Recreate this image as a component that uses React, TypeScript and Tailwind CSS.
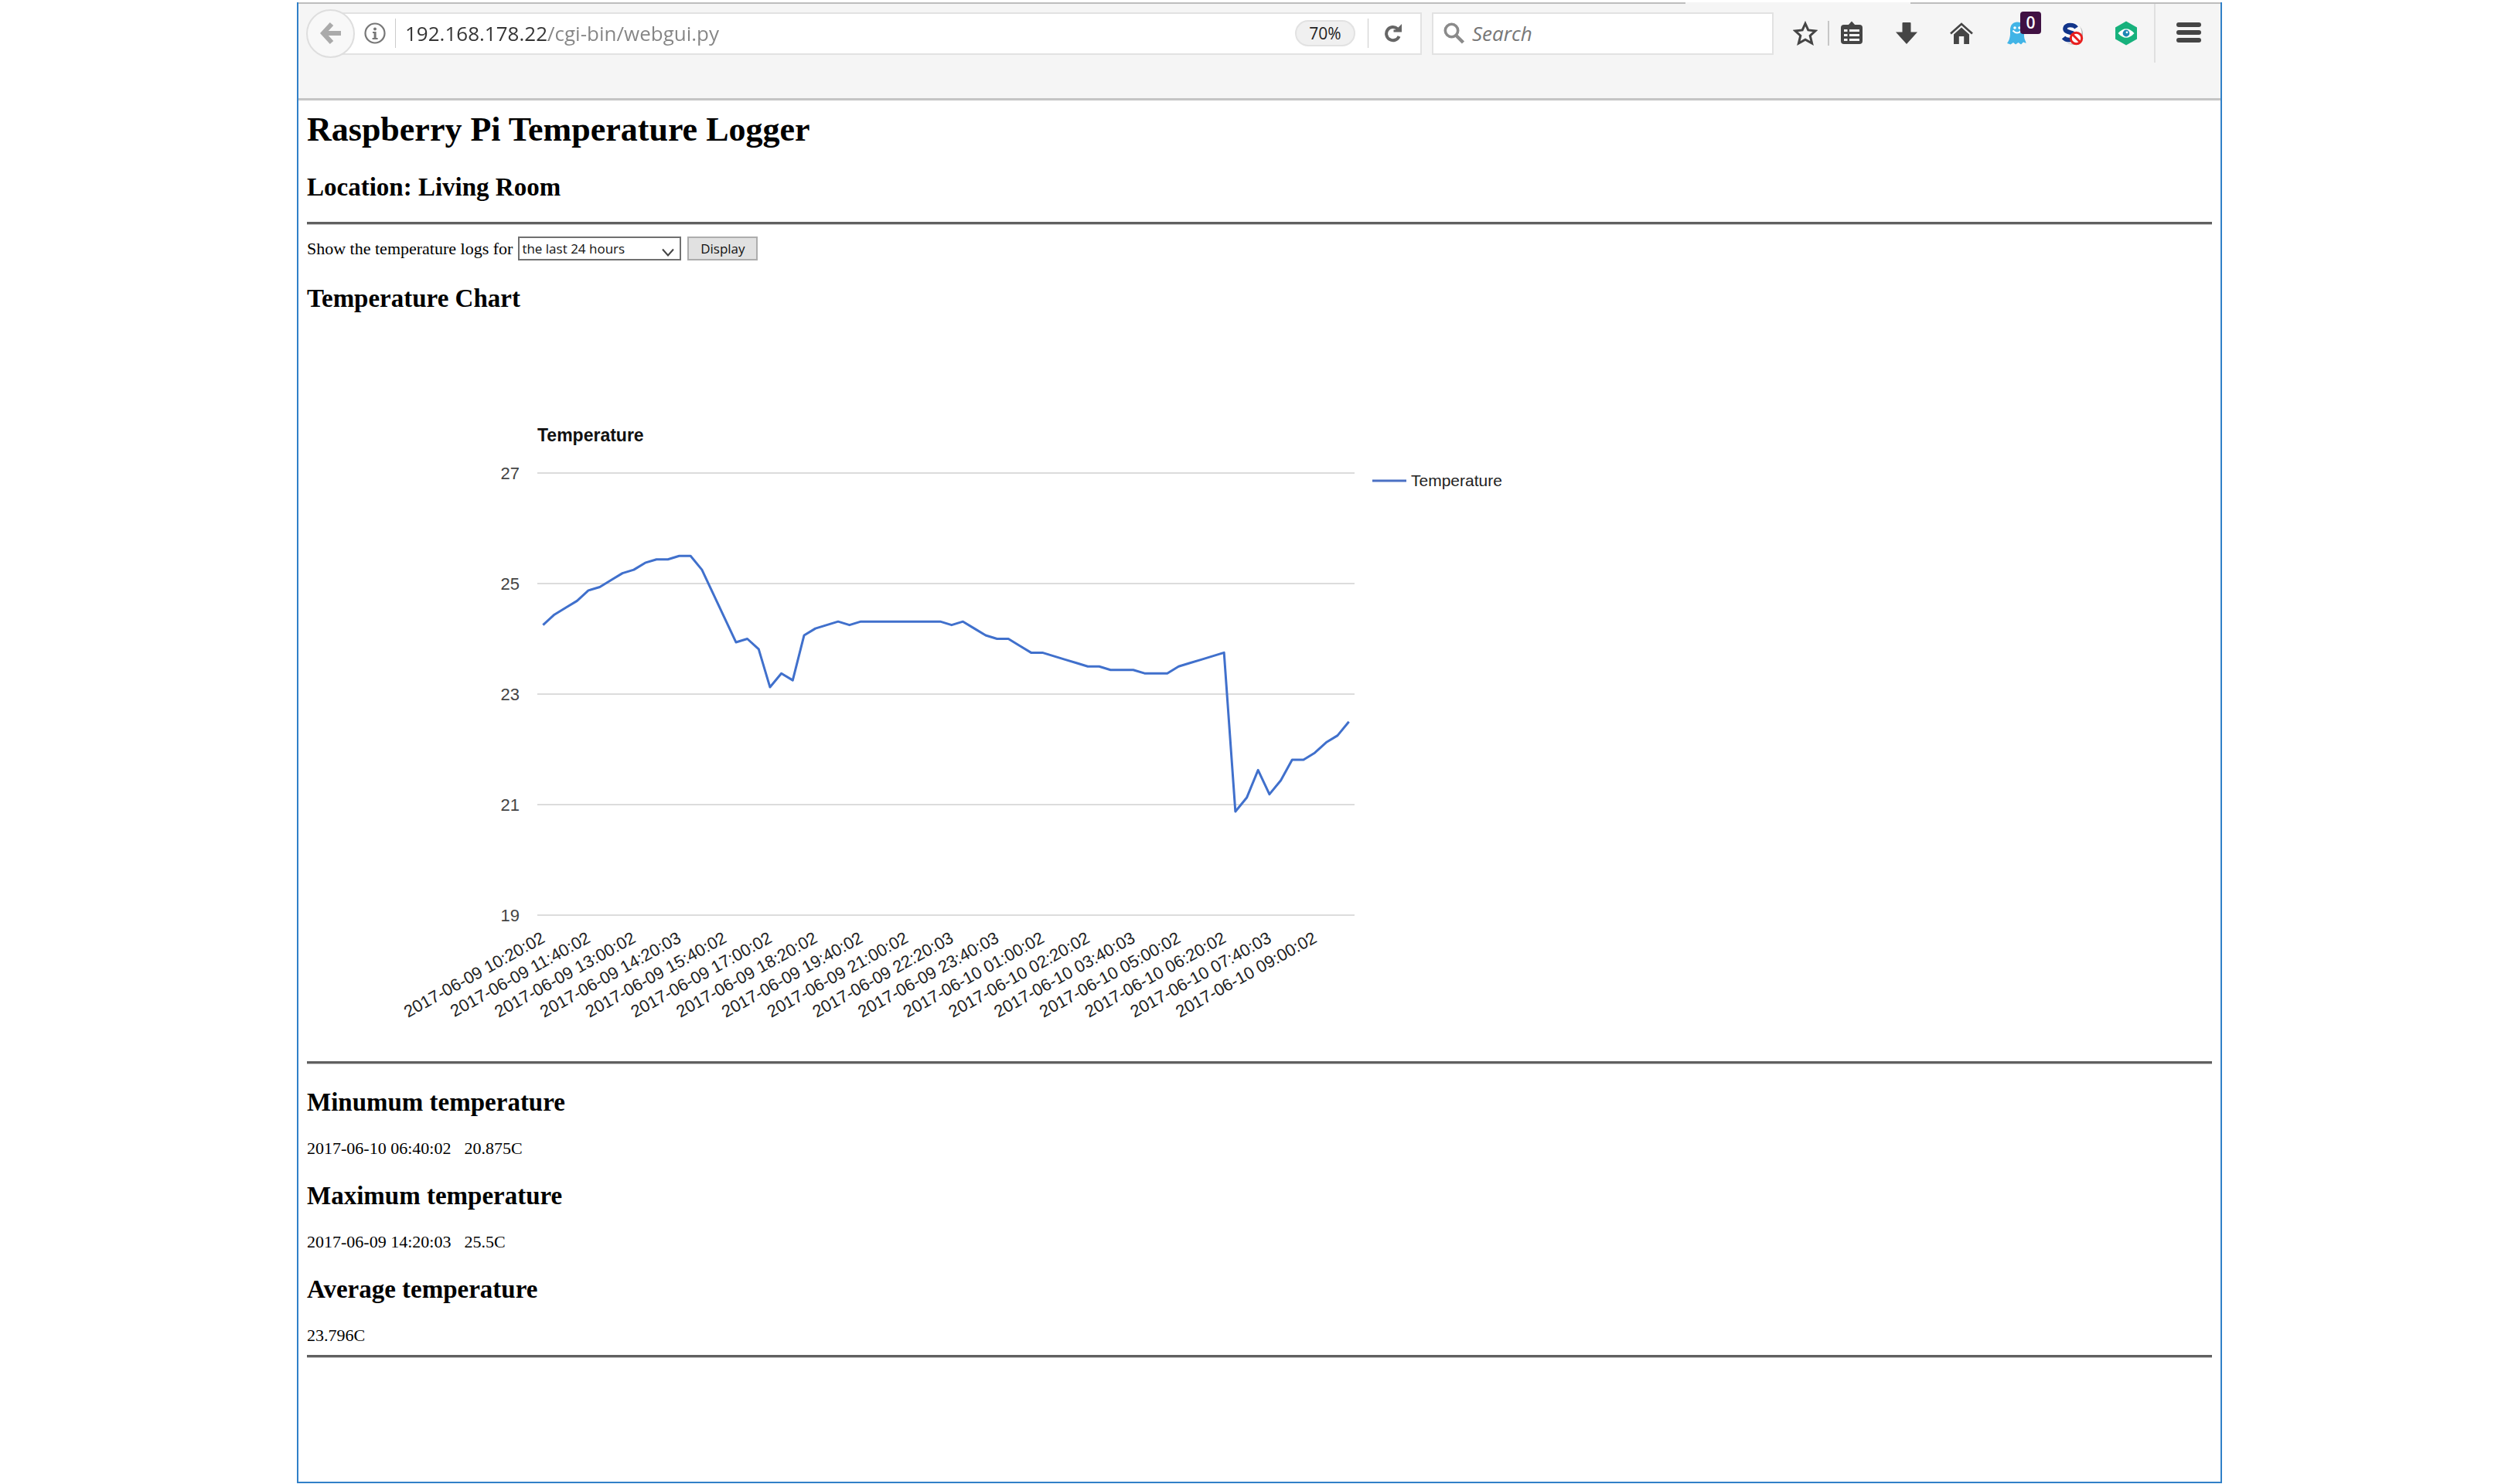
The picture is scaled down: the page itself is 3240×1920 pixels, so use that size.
import React from "react";

const READINGS = [
  24.25, 24.4375, 24.5625, 24.6875, 24.875, 24.9375, 25.0625, 25.1875, 25.25, 25.375, 25.4375, 25.4375,
  25.5, 25.5, 25.25, 24.8125, 24.375, 23.9375, 24, 23.8125, 23.125, 23.375, 23.25, 24.0625,
  24.1875, 24.25, 24.3125, 24.25, 24.3125, 24.3125, 24.3125, 24.3125, 24.3125, 24.3125, 24.3125, 24.3125,
  24.25, 24.3125, 24.1875, 24.0625, 24, 24, 23.875, 23.75, 23.75, 23.6875, 23.625, 23.5625,
  23.5, 23.5, 23.4375, 23.4375, 23.4375, 23.375, 23.375, 23.375, 23.5, 23.5625, 23.625, 23.6875,
  23.75, 20.875, 21.125, 21.625, 21.1875, 21.4375, 21.8125, 21.8125, 21.9375, 22.125, 22.25, 22.5,
];

const TIMES = [
  "2017-06-09 10:20:02",
  "2017-06-09 11:40:02",
  "2017-06-09 13:00:02",
  "2017-06-09 14:20:03",
  "2017-06-09 15:40:02",
  "2017-06-09 17:00:02",
  "2017-06-09 18:20:02",
  "2017-06-09 19:40:02",
  "2017-06-09 21:00:02",
  "2017-06-09 22:20:03",
  "2017-06-09 23:40:03",
  "2017-06-10 01:00:02",
  "2017-06-10 02:20:02",
  "2017-06-10 03:40:03",
  "2017-06-10 05:00:02",
  "2017-06-10 06:20:02",
  "2017-06-10 07:40:03",
  "2017-06-10 09:00:02",
];

const TICKS = [27, 25, 23, 21, 19];
const PLOT = { left: 298, right: 1355, top: 207, bottom: 779, max: 27, min: 19 };
const STEP = (PLOT.right - PLOT.left) / READINGS.length;

const xAt = (i: number) => PLOT.left + STEP * (i + 0.5);
const yAt = (t: number) =>
  PLOT.top + ((PLOT.max - t) / (PLOT.max - PLOT.min)) * (PLOT.bottom - PLOT.top);

function TemperatureChart() {
  const points = READINGS.map((t, i) => `${xAt(i)},${yAt(t)}`).join(" ");
  return (
    <svg
      viewBox="0 0 1600 968"
      className="block w-[1600px] max-w-full font-['Liberation_Sans',Arial,sans-serif] text-[22px]"
      role="img"
      aria-label="Temperature over the last 24 hours"
    >
      <text x={PLOT.left} y="166" fontSize="23" fontWeight="700" fill="#111">
        Temperature
      </text>
      {TICKS.map((t) => (
        <g key={t}>
          <line x1={PLOT.left} x2={PLOT.right} y1={yAt(t)} y2={yAt(t)} stroke="#dcdcdc" strokeWidth="2" />
          <text x="275" y={yAt(t) + 8} textAnchor="end" fill="#444">
            {t}
          </text>
        </g>
      ))}
      <polyline points={points} fill="none" stroke="#4070cc" strokeWidth="3" strokeLinejoin="round" />
      {TIMES.map((label, i) => {
        const x = xAt(i * 4) + 4;
        return (
          <text key={label} x={x} y="813" textAnchor="end" fill="#222" transform={`rotate(-29 ${x} 813)`}>
            {label}
          </text>
        );
      })}
      <line x1="1378" x2="1422" y1="217" y2="217" stroke="#4a70c4" strokeWidth="3" />
      <text x="1428" y="224" fontSize="21" fill="#222">
        Temperature
      </text>
    </svg>
  );
}

function ToolButton({ label, children }: { label: string; children: React.ReactNode }) {
  return (
    <button type="button" aria-label={label} className="relative block size-8 shrink-0">
      <svg viewBox="0 0 32 32" className="block size-8" aria-hidden="true">
        {children}
      </svg>
    </button>
  );
}

function Toolbar() {
  return (
    <header className="border-b-[3px] border-[#c4c4c4] bg-[#f5f5f5] pb-[46px] font-['Open_Sans','Noto_Sans',sans-serif]">
      <div className="flex">
        <div className="h-[2px] flex-1 bg-[#bdbdbd]" />
        <div className="w-[291px]" />
        <div className="h-[2px] w-[401px] bg-[#bdbdbd]" />
      </div>
      <div className="flex h-[76px] items-center pr-[25px] pl-[10px]">
        <button
          type="button"
          aria-label="Back"
          className="z-10 flex size-[63px] shrink-0 items-center justify-center rounded-full border-2 border-[#dedede] bg-[#f8f8f8]"
        >
          <svg viewBox="0 0 28 30" className="h-[30px] w-[28px]" aria-hidden="true">
            <path d="M15 3 L4 15 L15 27 M4 15 H27" fill="none" stroke="#aaa" strokeWidth="6" />
          </svg>
        </button>
        <div className="-ml-8 flex h-[55px] min-w-0 flex-1 items-center border-2 border-[#e2e2e2] bg-white pl-[42px]">
          <button type="button" aria-label="Site information" className="shrink-0">
            <svg viewBox="0 0 28 28" className="block size-[28px]" aria-hidden="true">
              <circle cx="14" cy="14" r="12.5" fill="none" stroke="#777" strokeWidth="2.2" />
              <circle cx="14" cy="8.5" r="2" fill="#777" />
              <path d="M11 12h4.6v8h2v2h-7v-2h2v-6H11z" fill="#777" />
            </svg>
          </button>
          <div className="ml-[12px] h-[38px] w-px bg-[#ccc]" />
          <input
            type="text"
            aria-label="Address"
            defaultValue="192.168.178.22/cgi-bin/webgui.py"
            className="ml-[12px] h-[44px] min-w-0 flex-1 bg-[linear-gradient(90deg,#333_185px,#858585_185px)] bg-clip-text text-[26px] leading-9 text-transparent outline-none"
          />
          <button
            type="button"
            className="h-[34px] w-[78px] shrink-0 rounded-full border-2 border-[#e2e2e2] bg-[#f0f0f0] text-[21px] leading-[28px] text-[#222]"
          >
            70%
          </button>
          <div className="ml-[16px] h-[38px] w-px bg-[#ccc]" />
          <button type="button" aria-label="Reload" className="mr-[23px] ml-[20px] shrink-0">
            <svg viewBox="0 0 24 24" className="block size-[24px]" aria-hidden="true">
              <path d="M17.5 6.2 A8.6 8.6 0 1 0 19.6 16" fill="none" stroke="#666" strokeWidth="4" />
              <path d="M23 0 V10.5 H12.5 V7.5 H15 L18 5 Z" fill="#666" />
            </svg>
          </button>
        </div>
        <div className="ml-[13px] flex h-[55px] w-[442px] shrink-0 items-center border-2 border-[#e2e2e2] bg-white pl-[13px]">
          <svg viewBox="0 0 28 28" className="size-[28px] shrink-0" aria-hidden="true">
            <circle cx="10.5" cy="10.5" r="8.2" fill="none" stroke="#8a8a8a" strokeWidth="3.6" />
            <path d="M16.5 17 L25.5 26" stroke="#8a8a8a" strokeWidth="4.4" />
          </svg>
          <input
            type="search"
            aria-label="Search"
            placeholder="Search"
            className="ml-[9px] h-[44px] min-w-0 flex-1 bg-transparent text-[26px] leading-9 italic outline-none placeholder:text-[#777]"
          />
        </div>
        <div className="ml-[25px] flex items-center">
          <ToolButton label="Bookmark this page">
            <path
              d="M16 3.5 L19.8 11.9 L29 12.9 L22.2 19.2 L24.6 29 L16 24.2 L7.4 29 L9.8 19.2 L3 12.9 L12.2 11.9 Z"
              fill="none"
              stroke="#454545"
              strokeWidth="3"
            />
          </ToolButton>
          <div className="mx-[13px] h-[32px] w-[2px] bg-[#c6c6c6]" />
          <div className="flex items-center gap-[39px]">
            <ToolButton label="Bookmarks menu">
              <path d="M11 6 L16 0.5 L21 6 Z" fill="#454545" />
              <rect x="2" y="5" width="28" height="25" rx="4" fill="#454545" />
              <path d="M6 11h4.5v3H6zM13 11h13v3H13zM6 17h4.5v3H6zM13 17h13v3H13zM6 23h4.5v3H6zM13 23h13v3H13z" fill="#f5f5f5" />
            </ToolButton>
            <ToolButton label="Downloads">
              <path d="M11.5 2 H20.5 Q21.5 2 21.5 3 V14.5 H30 L16 30 L2 14.5 H10.5 V3 Q10.5 2 11.5 2 Z" fill="#454545" />
            </ToolButton>
            <ToolButton label="Home">
              <path d="M2 16.5 L16 4 L30 16.5" fill="none" stroke="#454545" strokeWidth="2.6" />
              <path d="M6 17.5 L16 8.5 L26 17.5 V30 H19.2 V20 H12.8 V30 H6 Z" fill="#454545" />
            </ToolButton>
            <div className="relative">
              <ToolButton label="Tracker blocker">
                <path
                  d="M8 12 C8 5 12 1.5 17 1.5 C23 1.5 26 6 26 12 V20 C26 24 28.5 26 28.5 29 L25 27.5 L22 30.5 L18.5 28 L15 30.5 L12 28 L8.5 30.5 L4 29 C6.5 26 7.5 22 8 18 Z"
                  fill="#41b4e6"
                />
                <circle cx="14" cy="9" r="1.8" fill="#fff" />
                <circle cx="20" cy="9" r="1.8" fill="#fff" />
                <path d="M11.5 12.5 Q17 18.5 22.5 12.5" fill="none" stroke="#fff" strokeWidth="2" />
              </ToolButton>
              <span className="absolute -top-3 left-[21px] flex h-[29px] w-[27px] items-center justify-center rounded-[4px] bg-[#401143] text-[21px] leading-none font-semibold text-white">
                0
              </span>
            </div>
            <ToolButton label="Script blocker">
              <circle cx="17.5" cy="17" r="13.5" fill="#aaa" />
              <circle cx="15.5" cy="15.5" r="14" fill="#fafafa" />
              <path
                d="M22.5 9 C20 5 8.5 3.5 8 10 C7.8 16.5 21.5 13.5 21 20.5 C20.5 25.5 9.5 26 6 21.5"
                fill="none"
                stroke="#12358a"
                strokeWidth="5.6"
              />
              <circle cx="22.5" cy="22.5" r="7.2" fill="#fff" stroke="#e8201f" strokeWidth="3" />
              <path d="M17.5 17.5 L27.5 27.5" stroke="#e8201f" strokeWidth="3" />
            </ToolButton>
            <ToolButton label="Privacy guard">
              <path d="M16 0.5 L30 8.5 V23.5 L16 31.5 L2 23.5 V8.5 Z" fill="#17b17c" />
              <path d="M5.5 16 Q16 4.5 26.5 16 Q16 27.5 5.5 16 Z" fill="#fff" />
              <circle cx="16" cy="16" r="4.4" fill="#1d87b5" />
              <circle cx="17" cy="14.8" r="1.4" fill="#fff" />
            </ToolButton>
          </div>
          <div className="mr-[27px] ml-[20px] h-[76px] w-[2px] bg-[#e0e0e0]" />
          <ToolButton label="Open menu">
            <rect x="0" y="2" width="32" height="6" rx="3" fill="#454545" />
            <rect x="0" y="12" width="32" height="6" rx="3" fill="#454545" />
            <rect x="0" y="22" width="32" height="6" rx="3" fill="#454545" />
          </ToolButton>
        </div>
      </div>
    </header>
  );
}

function Rule({ className }: { className?: string }) {
  return (
    <hr className={`h-[4px] border-t-[3px] border-b border-t-[#606060] border-b-[#c8c8c8] ${className ?? ""}`} />
  );
}

function Heading({ children }: { children: React.ReactNode }) {
  return <h2 className="mt-[30px] text-[33px] leading-[38px] font-bold">{children}</h2>;
}

function Value({ children }: { children: React.ReactNode }) {
  return <p className="mt-[29px] flex gap-[17px]">{children}</p>;
}

export default function App() {
  return (
    <div className="flex min-h-screen flex-col bg-white pt-[3px] pr-[366px] pb-px pl-[384px]">
      <div className="flex-1 border-2 border-t-0 border-[#3080c8]">
        <Toolbar />
        <main className="px-[11px] pt-[13px] font-['Liberation_Serif','Times_New_Roman',serif] text-[22px] leading-6 text-black">
          <h1 className="text-[44px] leading-[50px] font-bold">Raspberry Pi Temperature Logger</h1>
          <Heading>Location: Living Room</Heading>
          <Rule className="mt-[26px]" />
          <form className="mt-[15px] flex items-center" onSubmit={(e) => e.preventDefault()}>
            <label htmlFor="interval">Show the temperature logs for</label>
            <div className="relative ml-[7px] font-['Open_Sans','Noto_Sans',sans-serif]">
              <select
                id="interval"
                defaultValue="24"
                className="block h-[31px] w-[211px] appearance-none border-2 border-[#707070] bg-white pl-[3px] text-[17px] leading-6 text-[#111]"
              >
                <option value="6">the last 6 hours</option>
                <option value="12">the last 12 hours</option>
                <option value="24">the last 24 hours</option>
              </select>
              <svg
                viewBox="0 0 16 12"
                className="pointer-events-none absolute right-[9px] bottom-[4px] h-[12px] w-[16px]"
                aria-hidden="true"
              >
                <path d="M1 1.5 L8 9.5 L15 1.5" fill="none" stroke="#444" strokeWidth="2" />
              </svg>
            </div>
            <button
              type="submit"
              className="ml-[8px] h-[31px] w-[91px] border-2 border-[#adadad] bg-[#e1e1e1] font-['Open_Sans','Noto_Sans',sans-serif] text-[17px] leading-6 text-[#111]"
            >
              Display
            </button>
          </form>
          <Heading>Temperature Chart</Heading>
          <TemperatureChart />
          <Rule />
          <Heading>Minumum temperature</Heading>
          <Value>
            <span>2017-06-10 06:40:02</span>
            <span>20.875C</span>
          </Value>
          <Heading>Maximum temperature</Heading>
          <Value>
            <span>2017-06-09 14:20:03</span>
            <span>25.5C</span>
          </Value>
          <Heading>Average temperature</Heading>
          <Value>
            <span>23.796C</span>
          </Value>
          <Rule className="mt-[13px]" />
        </main>
      </div>
    </div>
  );
}
